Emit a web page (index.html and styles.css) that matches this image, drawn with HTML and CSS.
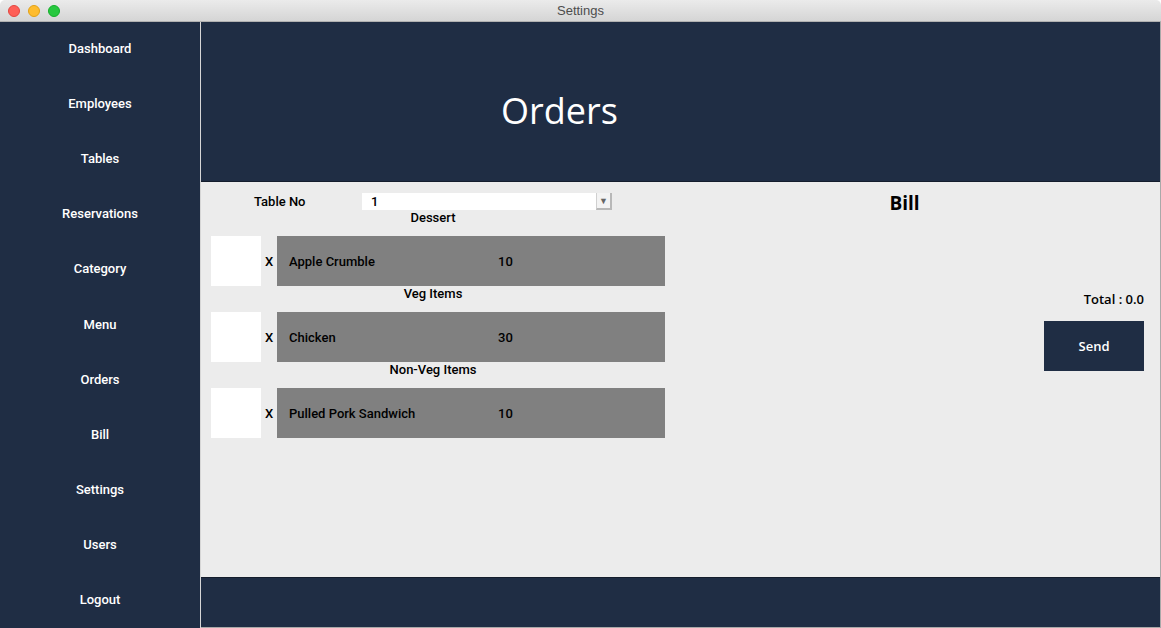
FILE: index.html
```html
<!DOCTYPE html>
<html lang="en">
<head>
    <meta charset="UTF-8">
    <title>Settings</title>
    <link rel="stylesheet" href="styles.css">
</head>
<body>
    <div class="window">
        <div class="titlebar">
            <div class="lights">
                <span class="light red"></span>
                <span class="light yellow"></span>
                <span class="light green"></span>
            </div>
            <div class="window-title">Settings</div>
        </div>

        <div class="app">
            <nav class="sidebar">
                <a href="#" class="nav-item">Dashboard</a>
                <a href="#" class="nav-item">Employees</a>
                <a href="#" class="nav-item">Tables</a>
                <a href="#" class="nav-item">Reservations</a>
                <a href="#" class="nav-item">Category</a>
                <a href="#" class="nav-item">Menu</a>
                <a href="#" class="nav-item">Orders</a>
                <a href="#" class="nav-item">Bill</a>
                <a href="#" class="nav-item">Settings</a>
                <a href="#" class="nav-item">Users</a>
                <a href="#" class="nav-item">Logout</a>
            </nav>

            <main class="main">
                <header class="main-header">
                    <h1>Orders</h1>
                </header>

                <section class="content">
                    <div class="order-panel">
                        <div class="table-row">
                            <span class="table-label">Table No</span>
                            <div class="combo">
                                <span class="combo-value">1</span>
                                <span class="combo-arrow">&#9660;</span>
                            </div>
                        </div>

                        <div class="category">Dessert</div>
                        <div class="item-row">
                            <div class="qty-box"></div>
                            <span class="times">X</span>
                            <div class="item-box">
                                <span class="item-name">Apple Crumble</span>
                                <span class="item-price">10</span>
                            </div>
                        </div>

                        <div class="category">Veg Items</div>
                        <div class="item-row">
                            <div class="qty-box"></div>
                            <span class="times">X</span>
                            <div class="item-box">
                                <span class="item-name">Chicken</span>
                                <span class="item-price">30</span>
                            </div>
                        </div>

                        <div class="category">Non-Veg Items</div>
                        <div class="item-row">
                            <div class="qty-box"></div>
                            <span class="times">X</span>
                            <div class="item-box">
                                <span class="item-name">Pulled Pork Sandwich</span>
                                <span class="item-price">10</span>
                            </div>
                        </div>
                    </div>

                    <div class="bill-panel">
                        <h2 class="bill-title">Bill</h2>
                        <div class="bill-total">Total : 0.0</div>
                        <button class="send-button">Send</button>
                    </div>
                </section>

                <footer class="main-footer"></footer>
            </main>
        </div>
    </div>
</body>
</html>
```

FILE: styles.css
```css
* {
    box-sizing: border-box;
}

body {
    margin: 0;
    padding: 0;
    background-color: #ffffff;
    font-family: 'Roboto', 'Liberation Sans', sans-serif;
    color: #000;
}

.window {
    width: 1161px;
    height: 628px;
    display: flex;
    flex-direction: column;
    overflow: hidden;
    border-radius: 5px 5px 0 0;
}

/* Title bar */
.titlebar {
    height: 22px;
    flex-shrink: 0;
    position: relative;
    display: flex;
    align-items: center;
    justify-content: center;
    background: linear-gradient(#ebebeb, #d5d5d5);
    border-bottom: 1px solid #b1b1b1;
}

.lights {
    position: absolute;
    left: 8px;
    top: 5px;
    display: flex;
    gap: 8px;
}

.light {
    width: 12px;
    height: 12px;
    border-radius: 50%;
}

.red { background-color: #fe5f57; border: 1px solid #e2463f; }
.yellow { background-color: #febc2e; border: 1px solid #e1a116; }
.green { background-color: #28c840; border: 1px solid #14ae2a; }

.window-title {
    font-family: 'Liberation Sans', sans-serif;
    font-size: 13px;
    color: #4d4d4d;
}

/* App body */
.app {
    flex: 1;
    display: flex;
    min-height: 0;
}

.sidebar {
    width: 201px;
    flex-shrink: 0;
    display: flex;
    flex-direction: column;
    background-color: #1f2d44;
    border-right: 1px solid #d6d6d6;
}

.nav-item {
    flex: 1;
    display: flex;
    align-items: center;
    justify-content: center;
    padding-bottom: 2px;
    color: #ffffff;
    text-decoration: none;
    font-size: 13px;
    font-weight: 500;
}

.main {
    flex: 1;
    display: flex;
    flex-direction: column;
    border-right: 1px solid #a9a9a9;
}

.main-header {
    height: 160px;
    flex-shrink: 0;
    background-color: #1f2d44;
    border-bottom: 1px solid #141d2c;
    padding-left: 300px;
    display: flex;
    align-items: center;
}

.main-header h1 {
    margin: 18px 0 0 0;
    font-family: 'Open Sans', sans-serif;
    font-weight: 400;
    font-size: 36px;
    color: #ffffff;
}

.content {
    flex: 1;
    display: flex;
    background-color: #ececec;
    padding: 11px 16px 0 10px;
}

/* Order panel */
.order-panel {
    width: 454px;
    display: flex;
    flex-direction: column;
}

.table-row {
    height: 17px;
    display: flex;
    align-items: center;
    font-size: 13px;
    font-weight: 500;
}

.table-label {
    width: 151px;
    padding-left: 43px;
}

.combo {
    width: 250px;
    height: 17px;
    display: flex;
    align-items: center;
    background-color: #ffffff;
}

.combo-value {
    flex: 1;
    padding-left: 9px;
}

.combo-arrow {
    width: 16px;
    height: 17px;
    display: flex;
    align-items: center;
    justify-content: center;
    font-size: 9px;
    color: #666;
    background-color: #f3f3f3;
    border-left: 1px solid #d0d0d0;
    border-right: 2px solid #b8b8b8;
    border-bottom: 2px solid #b8b8b8;
}

.category {
    width: 444px;
    height: 16px;
    line-height: 16px;
    margin-bottom: 10px;
    text-align: center;
    font-size: 13px;
    font-weight: 500;
}

.item-row {
    height: 50px;
    display: flex;
    align-items: center;
    font-size: 13px;
    font-weight: 500;
}

.qty-box {
    width: 50px;
    height: 50px;
    background-color: #ffffff;
}

.times {
    width: 16px;
    text-align: center;
}

.item-box {
    flex: 1;
    height: 50px;
    display: flex;
    align-items: center;
    padding-left: 12px;
    background-color: #808080;
}

.item-name {
    width: 209px;
}

/* Bill panel */
.bill-panel {
    flex: 1;
    display: flex;
    flex-direction: column;
    align-items: center;
    font-family: 'Open Sans', sans-serif;
}

.bill-title {
    margin: 0;
    font-size: 19px;
    font-weight: 700;
    line-height: 20px;
}

.bill-total {
    align-self: flex-end;
    margin-top: 77px;
    font-size: 13px;
    font-weight: 600;
    line-height: 18px;
}

.send-button {
    align-self: flex-end;
    margin-top: 13px;
    width: 100px;
    height: 50px;
    border: none;
    background-color: #1f2d44;
    color: #ffffff;
    font-family: 'Open Sans', sans-serif;
    font-size: 13px;
    font-weight: 600;
    cursor: pointer;
}

.main-footer {
    height: 51px;
    flex-shrink: 0;
    background-color: #1f2d44;
    border-top: 1px solid #141d2c;
    border-bottom: 1px solid #a9a9a9;
}
```
